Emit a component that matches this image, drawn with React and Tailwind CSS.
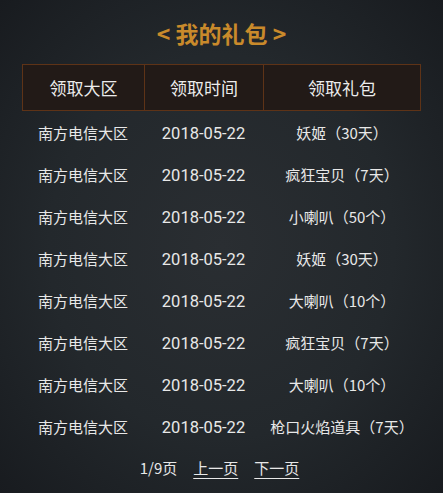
import React from 'react';

const rows = [
  ['南方电信大区', '2018-05-22', '妖姬（30天）'],
  ['南方电信大区', '2018-05-22', '疯狂宝贝（7天）'],
  ['南方电信大区', '2018-05-22', '小喇叭（50个）'],
  ['南方电信大区', '2018-05-22', '妖姬（30天）'],
  ['南方电信大区', '2018-05-22', '大喇叭（10个）'],
  ['南方电信大区', '2018-05-22', '疯狂宝贝（7天）'],
  ['南方电信大区', '2018-05-22', '大喇叭（10个）'],
  ['南方电信大区', '2018-05-22', '枪口火焰道具（7天）'],
];

const App = () => {
  return (
    <div className="w-[443px] h-[493px] overflow-hidden bg-[#202428] bg-[radial-gradient(ellipse_at_center,#2a2e32_0%,#23282c_55%,#181b1f_100%)] font-['Noto_Sans_CJK_SC',sans-serif] text-[#e8e8e8]">
      <div className="pt-[16px] h-[64px] text-center text-[23px] font-bold leading-[34px] text-[#c98a2b]">
        &lt; 我的礼包 &gt;
      </div>

      <div className="mx-[22px] grid grid-cols-[122px_119px_1fr] h-[47px] bg-[#221a17] border border-[#5e3317] text-[17px] text-[#ececec]">
        <div className="flex items-center justify-center border-r border-[#5e3317]">领取大区</div>
        <div className="flex items-center justify-center border-r border-[#5e3317]">领取时间</div>
        <div className="flex items-center justify-center">领取礼包</div>
      </div>

      <div className="mx-[22px] pt-[1px]">
        {rows.map((r, i) => (
          <div key={i} className="grid grid-cols-[122px_119px_1fr] h-[42px] items-center text-[15px]">
            <div className="text-center">{r[0]}</div>
            <div className="text-center font-['Roboto',sans-serif] text-[16.5px] pt-[2px]">{r[1]}</div>
            <div className="text-center">{r[2]}</div>
          </div>
        ))}
      </div>

      <div className="mt-[9px] flex justify-center items-center gap-[16px] text-[15px] pr-[4px]">
        <span>1/9页</span>
        <a className="underline underline-offset-[4px] decoration-1">上一页</a>
        <a className="underline underline-offset-[4px] decoration-1">下一页</a>
      </div>
    </div>
  );
};

export default App;
